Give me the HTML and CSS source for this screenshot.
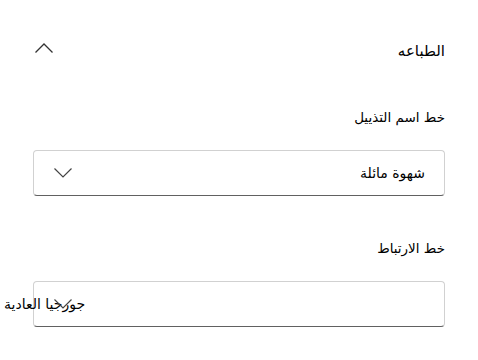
FILE: index.html
```html
<!DOCTYPE html>
<html lang="ar" dir="rtl">
<head>
    <meta charset="UTF-8">
    <meta name="viewport" content="width=device-width, initial-scale=1.0">
    <title>الطباعه</title>
    <link rel="stylesheet" href="styles.css">
</head>
<body>
    <div class="panel">
        <div class="section-header">
            <span class="section-title">الطباعه</span>
            <svg class="chevron" width="20" height="12" viewBox="0 0 20 12">
                <path d="M1.5 10.5 L10 2 L18.5 10.5" fill="none" stroke="#333" stroke-width="1.3"/>
            </svg>
        </div>

        <div class="field">
            <div class="field-label">خط اسم التذييل</div>
            <div class="dropdown">
                <span class="dropdown-value">شهوة مائلة</span>
                <svg class="chevron" width="20" height="12" viewBox="0 0 20 12">
                    <path d="M1.5 1.5 L10 10 L18.5 1.5" fill="none" stroke="#444" stroke-width="1.2"/>
                </svg>
            </div>
        </div>

        <div class="field field-second">
            <div class="field-label">خط الارتباط</div>
            <div class="dropdown">
                <span class="dropdown-value dropdown-value--spill">جورجيا العادية</span>
                <svg class="chevron" width="20" height="12" viewBox="0 0 20 12">
                    <path d="M1.5 1.5 L10 10 L18.5 1.5" fill="none" stroke="#444" stroke-width="1.2"/>
                </svg>
            </div>
        </div>
    </div>
</body>
</html>
```

FILE: styles.css
```css
body {
    margin: 0;
    background-color: #ffffff;
    font-family: "Segoe UI", "DejaVu Sans", sans-serif;
    color: #000000;
}

.panel {
    padding: 41px 33px 0 33px;
}

.section-header {
    display: flex;
    justify-content: space-between;
    align-items: center;
    height: 20px;
}

.section-header .chevron {
    margin-left: 1px;
    margin-top: -6px;
}

.section-title {
    font-size: 15px;
    line-height: 20px;
}

.field {
    margin-top: 46px;
}

.field-second {
    margin-top: 42px;
}

.field-label {
    font-size: 13.5px;
    line-height: 20px;
    margin-bottom: 23px;
}

.dropdown {
    display: flex;
    align-items: center;
    height: 44px;
    padding: 0 19px;
    border: 1px solid #d1d1d1;
    border-bottom-color: #616161;
    border-radius: 4px;
}

.dropdown-value {
    flex: 1;
    font-size: 14px;
    white-space: nowrap;
}

/* النص يخرج من حدود القائمة كما في الأصل */
.dropdown-value--spill {
    text-align: left;
    margin-left: -69px;
}
```
